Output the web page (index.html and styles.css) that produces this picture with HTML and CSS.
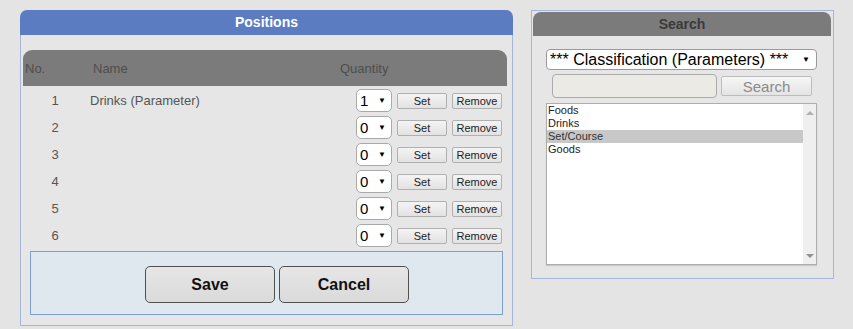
FILE: index.html
```html
<!DOCTYPE html>
<html lang="en">
<head>
    <meta charset="UTF-8">
    <title>Positions</title>
    <link rel="stylesheet" href="styles.css">
</head>
<body>
    <div class="page">
        <div class="positions">
            <div class="positions-head">Positions</div>
            <div class="positions-body">
                <div class="table-head">
                    <span class="col-no">No.</span>
                    <span class="col-name">Name</span>
                    <span class="col-qty">Quantity</span>
                </div>

                <div class="row">
                    <span class="num">1</span>
                    <span class="name">Drinks (Parameter)</span>
                    <span class="qty"><select><option>1</option><option>0</option></select></span>
                    <button class="small">Set</button>
                    <button class="small">Remove</button>
                </div>
                <div class="row">
                    <span class="num">2</span>
                    <span class="name"></span>
                    <span class="qty"><select><option>0</option><option>1</option></select></span>
                    <button class="small">Set</button>
                    <button class="small">Remove</button>
                </div>
                <div class="row">
                    <span class="num">3</span>
                    <span class="name"></span>
                    <span class="qty"><select><option>0</option><option>1</option></select></span>
                    <button class="small">Set</button>
                    <button class="small">Remove</button>
                </div>
                <div class="row">
                    <span class="num">4</span>
                    <span class="name"></span>
                    <span class="qty"><select><option>0</option><option>1</option></select></span>
                    <button class="small">Set</button>
                    <button class="small">Remove</button>
                </div>
                <div class="row">
                    <span class="num">5</span>
                    <span class="name"></span>
                    <span class="qty"><select><option>0</option><option>1</option></select></span>
                    <button class="small">Set</button>
                    <button class="small">Remove</button>
                </div>
                <div class="row">
                    <span class="num">6</span>
                    <span class="name"></span>
                    <span class="qty"><select><option>0</option><option>1</option></select></span>
                    <button class="small">Set</button>
                    <button class="small">Remove</button>
                </div>

                <div class="actions">
                    <button class="big">Save</button>
                    <button class="big">Cancel</button>
                </div>
            </div>
        </div>

        <div class="search">
            <div class="search-head">Search</div>
            <div class="search-body">
                <span class="class-select">
                    <select><option>*** Classification (Parameters) ***</option></select>
                </span>
                <div class="search-line">
                    <input type="text" class="search-input">
                    <button class="search-btn">Search</button>
                </div>
                <div class="listbox">
                    <ul class="items">
                        <li>Foods</li>
                        <li>Drinks</li>
                        <li class="selected">Set/Course</li>
                        <li>Goods</li>
                    </ul>
                    <div class="scrollbar">
                        <span class="arrow-up"></span>
                        <span class="arrow-down"></span>
                    </div>
                </div>
            </div>
        </div>
    </div>
</body>
</html>
```

FILE: styles.css
```css
body {
    margin: 0;
    background-color: #e4e4e4;
    font-family: "Liberation Sans", Arial, sans-serif;
}
.page {
    display: flex;
    align-items: flex-start;
    gap: 18px;
    padding: 10px 0 0 20px;
}

/* Positions panel */
.positions {
    width: 493px;
}
.positions-head {
    height: 25px;
    line-height: 25px;
    background-color: #5b7cc0;
    border-radius: 7px 7px 0 0;
    color: #fff;
    font-weight: bold;
    font-size: 14px;
    text-align: center;
}
.positions-body {
    height: 291px;
    box-sizing: border-box;
    border: 1px solid #a4b6dc;
    border-top: none;
    background-color: #e6e6e6;
    padding: 15px 5px 0 2px;
}
.table-head {
    display: flex;
    align-items: center;
    height: 36px;
    background-color: #7b7b7b;
    border-radius: 9px 9px 0 0;
    color: #4e4e4e;
    font-size: 13px;
    margin-bottom: 1px;
}
.col-no {
    width: 68px;
    padding-left: 2px;
}
.col-name {
    width: 247px;
}
.row {
    display: flex;
    align-items: center;
    height: 27px;
    color: #555;
    font-size: 13px;
}
.num {
    width: 64px;
    text-align: center;
}
.name {
    flex: 1;
    padding-left: 3px;
}
.qty {
    position: relative;
    margin-right: 5px;
}
.qty select {
    -webkit-appearance: none;
    appearance: none;
    width: 36px;
    height: 23px;
    border: 1px solid #a9a9a9;
    border-radius: 5px;
    background: #fff;
    padding: 0 0 0 3px;
    font-family: "Liberation Sans", Arial, sans-serif;
    font-size: 15px;
    color: #000;
}
.qty::after {
    content: "▼";
    position: absolute;
    right: 6px;
    top: 7px;
    font-size: 8px;
    color: #000;
    pointer-events: none;
}
button.small {
    height: 16px;
    width: 50px;
    padding: 0;
    margin-right: 5px;
    border: 1px solid #b0b0b0;
    border-radius: 2px;
    background: linear-gradient(#f4f4f4, #e2e2e2);
    font-family: "Liberation Sans", Arial, sans-serif;
    font-size: 11px;
    color: #222;
}
.actions {
    display: flex;
    gap: 4px;
    height: 64px;
    margin: 2px 4px 0 7px;
    padding: 14px 0 0 114px;
    box-sizing: border-box;
    background-color: #dfe7ef;
    border: 1px solid #7e9fd6;
}
button.big {
    width: 130px;
    height: 37px;
    border: 1px solid #505050;
    border-radius: 5px;
    background: linear-gradient(#e6e6e6, #dadada);
    font-family: "Liberation Sans", Arial, sans-serif;
    font-size: 16px;
    font-weight: bold;
    color: #111;
}

/* Search panel */
.search {
    width: 300px;
    height: 266px;
    border: 1px solid #a4b6dc;
    padding: 1px 0 0 1px;
    box-sizing: content-box;
    background-color: #e6e6e6;
}
.search-head {
    width: 298px;
    height: 24px;
    line-height: 24px;
    background-color: #7b7b7b;
    border-radius: 8px 8px 0 0;
    color: #3a3a3a;
    font-weight: bold;
    font-size: 14px;
    text-align: center;
}
.search-body {
    padding: 13px 0 0 13px;
}
.class-select {
    position: relative;
    display: block;
    width: 271px;
}
.class-select select {
    -webkit-appearance: none;
    appearance: none;
    width: 271px;
    height: 21px;
    border: 1px solid #9a9a9a;
    border-radius: 4px;
    background: #fff;
    padding: 0 0 0 3px;
    font-family: "Liberation Sans", Arial, sans-serif;
    font-size: 16px;
    color: #000;
}
.class-select::after {
    content: "▼";
    position: absolute;
    right: 7px;
    top: 6px;
    font-size: 8px;
    color: #000;
    pointer-events: none;
}
.search-line {
    display: flex;
    align-items: center;
    gap: 4px;
    margin: 4px 0 0 6px;
}
.search-input {
    width: 165px;
    height: 24px;
    box-sizing: border-box;
    border: 1px solid #ababab;
    border-radius: 4px;
    background-color: #ebeae4;
}
.search-btn {
    width: 91px;
    height: 20px;
    padding: 0;
    border: 1px solid #bdbdbd;
    border-radius: 2px;
    background: linear-gradient(#f6f6f6, #e4e4e4);
    font-family: "Liberation Sans", Arial, sans-serif;
    font-size: 15px;
    color: #8a8a8a;
}
.listbox {
    display: flex;
    width: 271px;
    height: 162px;
    margin-top: 5px;
    box-sizing: border-box;
    border: 1px solid #adadad;
    background: #fff;
    box-shadow: 0 1px 1px #c8c8c8;
}
.items {
    flex: 1;
    list-style: none;
    margin: 0;
    padding: 0;
    font-size: 11px;
    line-height: 13px;
    color: #222;
}
.items li {
    padding-left: 1px;
}
.items li.selected {
    background-color: #c8c8c8;
    color: #333;
}
.scrollbar {
    position: relative;
    width: 13px;
    background-color: #efefef;
}
.arrow-up,
.arrow-down {
    position: absolute;
    left: 3px;
    width: 0;
    height: 0;
    border-left: 4px solid transparent;
    border-right: 4px solid transparent;
}
.arrow-up {
    top: 7px;
    border-bottom: 4px solid #b0b0b0;
}
.arrow-down {
    bottom: 6px;
    border-top: 4px solid #909090;
}
```
